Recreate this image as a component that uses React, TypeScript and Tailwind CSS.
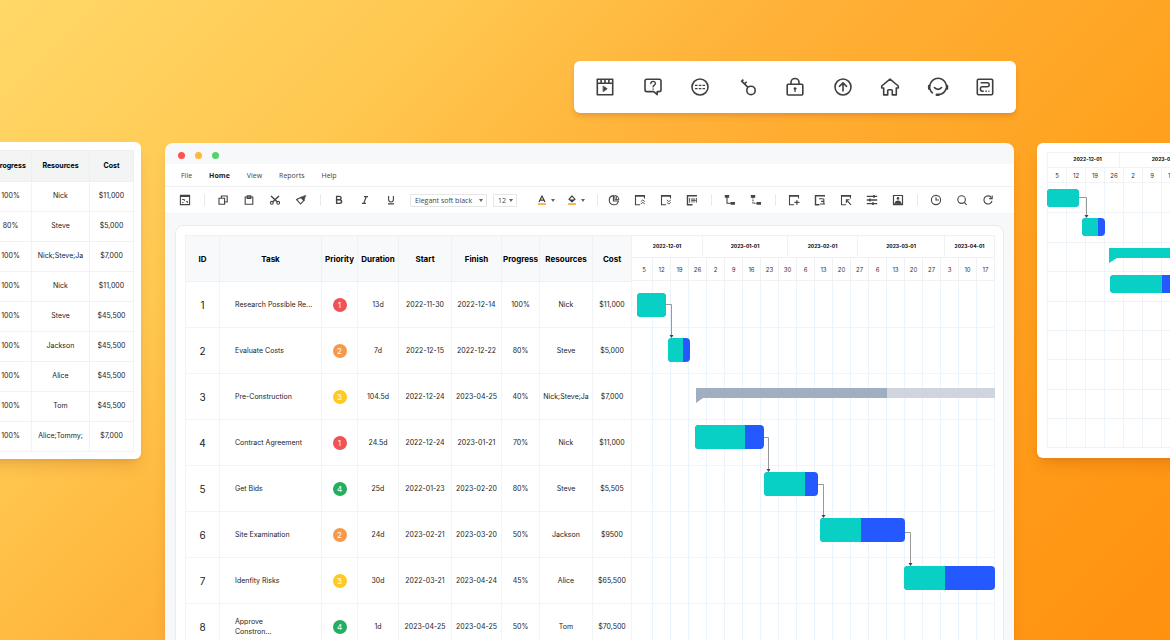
import type { ReactNode } from "react";
import clsx from "clsx";

type Task = {
  id: number;
  name: string;
  priority: 1 | 2 | 3 | 4;
  duration: string;
  start: string;
  finish: string;
  progress: string;
  resources: string;
  cost: string;
};

const TASKS: Task[] = [
  { id: 1, name: "Research Possible Re...", priority: 1, duration: "13d", start: "2022-11-30", finish: "2022-12-14", progress: "100%", resources: "Nick", cost: "$11,000" },
  { id: 2, name: "Evaluate Costs", priority: 2, duration: "7d", start: "2022-12-15", finish: "2022-12-22", progress: "80%", resources: "Steve", cost: "$5,000" },
  { id: 3, name: "Pre-Construction", priority: 3, duration: "104.5d", start: "2022-12-24", finish: "2023-04-25", progress: "40%", resources: "Nick;Steve;Ja", cost: "$7,000" },
  { id: 4, name: "Contract Agreement", priority: 1, duration: "24.5d", start: "2022-12-24", finish: "2023-01-21", progress: "70%", resources: "Nick", cost: "$11,000" },
  { id: 5, name: "Get Bids", priority: 4, duration: "25d", start: "2022-01-23", finish: "2023-02-20", progress: "80%", resources: "Steve", cost: "$5,505" },
  { id: 6, name: "Site Examination", priority: 2, duration: "24d", start: "2023-02-21", finish: "2023-03-20", progress: "50%", resources: "Jackson", cost: "$9500" },
  { id: 7, name: "Idenfity Risks", priority: 3, duration: "30d", start: "2022-03-21", finish: "2023-04-24", progress: "45%", resources: "Alice", cost: "$65,500" },
  { id: 8, name: "Approve Constron...", priority: 4, duration: "1d", start: "2023-04-25", finish: "2023-04-25", progress: "50%", resources: "Tom", cost: "$70,500" },
];

const PRIORITY_COLORS = {
  1: "bg-[#ee5456]",
  2: "bg-[#f6994a]",
  3: "bg-[#ffc91f]",
  4: "bg-[#26ae60]",
};

const COLUMNS = [
  { label: "ID", width: "w-[34px]" },
  { label: "Task", width: "" },
  { label: "Priority", width: "w-9" },
  { label: "Duration", width: "w-[41px]" },
  { label: "Start", width: "w-[53px]" },
  { label: "Finish", width: "w-[50px]" },
  { label: "Progress", width: "w-[38px]" },
  { label: "Resources", width: "w-[53px]" },
  { label: "Cost", width: "w-[39px]" },
];

const COSTS = [
  ["100%", "Nick", "$11,000"],
  ["80%", "Steve", "$5,000"],
  ["100%", "Nick;Steve;Ja", "$7,000"],
  ["100%", "Nick", "$11,000"],
  ["100%", "Steve", "$45,500"],
  ["100%", "Jackson", "$45,500"],
  ["100%", "Alice", "$45,500"],
  ["100%", "Tom", "$45,500"],
  ["100%", "Alice;Tommy;", "$7,000"],
];

const MONTHS = [
  { label: "2022-12-01", width: "w-[71px]" },
  { label: "2023-01-01", width: "w-[85px]" },
  { label: "2023-02-01", width: "w-[70px]" },
  { label: "2023-03-01", width: "w-[87px]" },
  { label: "2023-04-01", width: "w-[50px]" },
];

const WEEKS = [5, 12, 19, 26, 2, 9, 16, 23, 30, 6, 13, 20, 27, 6, 13, 20, 27, 3, 10, 17];

/* ---------- Icons ---------- */

function BigIcon({ label, children }: { label: string; children: ReactNode }) {
  return (
    <button type="button" aria-label={label} className="text-[#3f3f3f]">
      <svg viewBox="0 0 18 18" className="block h-[18px] w-[18px] overflow-visible" fill="none" stroke="currentColor" strokeWidth="1.6" strokeLinejoin="round" strokeLinecap="round">
        {children}
      </svg>
    </button>
  );
}

function Tool({ label, children }: { label: string; children: ReactNode }) {
  return (
    <button type="button" aria-label={label} className="flex h-5 w-[26px] items-center justify-center text-[#444]">
      <svg viewBox="0 0 12 12" className="h-3 w-3 overflow-visible" fill="none" stroke="currentColor" strokeWidth="1.1">
        {children}
      </svg>
    </button>
  );
}

function Divider() {
  return (
    <span className="flex w-3 justify-center">
      <span className="h-3 w-px bg-[#e9e9e9]" />
    </span>
  );
}

// Window outline shared by the insert / layout tools
function Frame() {
  return (
    <>
      <path d="M1.5 1v9.8h4.6M10.5 1v3.5" />
      <path d="M1 1.8h10" strokeWidth="1.8" />
    </>
  );
}

function Caret() {
  return (
    <svg viewBox="0 0 4 3" className="h-[3px] w-1" fill="#666">
      <path d="M0 0h4L2 3z" />
    </svg>
  );
}

/* ---------- Floating icon bar ---------- */

function IconBar() {
  return (
    <div className="flex h-[52px] w-[442px] items-center justify-between rounded-md bg-white px-[22px] shadow-md shadow-orange-900/15">
      <BigIcon label="Video">
        <path d="M1.3 1.3h15.4v15.4H1.3zM1.3 5.2h15.4M5.1 1.5v3.5M9 1.5v3.5M12.9 1.5v3.5" strokeLinecap="butt" />
        <path d="M7.4 8.2l3.8 2.6-3.8 2.6z" fill="currentColor" strokeWidth=".8" />
      </BigIcon>
      <BigIcon label="Help">
        <path d="M2.8 1.2h12.4q1.8 0 1.8 1.8v8.8q0 1.8-1.8 1.8h-2v3l-3.4-3h-7Q1 13.6 1 11.8V3q0-1.8 1.8-1.8z" />
        <path d="M6.8 5.7c0-3 4.7-3 4.7-.2 0 1.6-2.4 1.7-2.4 3.4M9.1 10.9v.3" strokeWidth="1.3" />
      </BigIcon>
      <BigIcon label="More">
        <circle cx="9" cy="9" r="8" />
        <path d="M4 7.4h2.6M7.8 7.4h2.6M11.6 7.4h2.4M4 10.6h2.6M7.8 10.6h2.6M11.6 10.6h2.4" strokeWidth="1.3" strokeLinecap="butt" />
      </BigIcon>
      <BigIcon label="Key">
        <circle cx="12" cy="12.4" r="4.2" />
        <path d="M9 9.4L2.2 2.6M5.4 6l2.2-2.2M2.2 3.6l2.2-2" strokeLinecap="butt" />
      </BigIcon>
      <BigIcon label="Lock">
        <rect x="1.2" y="6.2" width="15.6" height="10.8" rx="1" />
        <path d="M5 6V4.5a4 4 0 0 1 8 0V6" />
        <circle cx="9" cy="10.6" r="1.1" fill="currentColor" strokeWidth=".6" />
        <path d="M9 11v2.4" strokeWidth="1.3" />
      </BigIcon>
      <BigIcon label="Upload">
        <circle cx="9" cy="9" r="8" />
        <path d="M9 13V5.2M5.4 8.3L9 4.9l3.6 3.4" />
      </BigIcon>
      <BigIcon label="Home">
        <path d="M9 1.1L.7 8v2h2v6.9h4v-4.2q0-1 1-1h2.6q1 0 1 1v4.2h4V10h2V8z" />
      </BigIcon>
      <BigIcon label="Support">
        <path d="M.8 7.4a8.4 8.4 0 0 1 16.6 0M17.2 10.6a8.4 8.4 0 0 1-7.4 6M1 11.2c.5 1.6 1.3 2.6 2.4 3.6M5.4 9.6c1.8 2.4 5.4 2.4 7.2 0" />
        <path d="M.2 8v2.6M18 8v2.6M7.8 16.8h1.6" strokeWidth="2.6" />
      </BigIcon>
      <BigIcon label="Route">
        <rect x="1.3" y="1.3" width="15.4" height="15.4" rx="1.2" />
        <path d="M4.6 4.8h6.6q2 0 2 2t-2 2H6.4q-2 0-2 2.2t2 2.2h1.4M9.4 13.2h1.4M12.4 13.2h1" strokeWidth="1.5" strokeLinecap="butt" />
      </BigIcon>
    </div>
  );
}

/* ---------- Side cards ---------- */

function CostCard() {
  return (
    <div className="shrink-0 rounded-md bg-white px-[7px] pb-[7px] pt-2 shadow-lg shadow-orange-900/15">
      <table className="table-fixed border-collapse text-center text-[7px] text-[#222]">
        <thead>
          <tr className="h-[31px] bg-[#f3f4f4] font-bold text-black">
            <th className="w-[42px] border border-[#efefef] p-0">Progress</th>
            <th className="w-[58px] border border-[#efefef] p-0">Resources</th>
            <th className="w-11 border border-[#efefef] p-0">Cost</th>
          </tr>
        </thead>
        <tbody>
          {COSTS.map((row, i) => (
            <tr key={i} className="h-[30px]">
              {row.map((cell, j) => (
                <td key={j} className="whitespace-nowrap border border-[#f2f2f2] p-0">
                  {cell}
                </td>
              ))}
            </tr>
          ))}
        </tbody>
      </table>
    </div>
  );
}

type BarProps = { x: number; y: number; w: number; h: number; done: number };

function Bar({ x, y, w, h, done }: BarProps) {
  const id = `bar-${x}-${y}-${h}`;
  return (
    <g>
      <clipPath id={id}>
        <rect x={x} y={y} width={w} height={h} rx="4" />
      </clipPath>
      <g clipPath={`url(#${id})`}>
        <rect x={x} y={y} width={w} height={h} fill="#2459ff" />
        <rect x={x} y={y} width={done} height={h} fill="#08d0c5" />
      </g>
    </g>
  );
}

function Arrow({ x, y, toX, toY }: { x: number; y: number; toX: number; toY: number }) {
  return (
    <g>
      <path d={`M${x} ${y}H${toX}V${toY - 2}`} fill="none" stroke="#999" strokeWidth="1" />
      <path d={`M${toX - 2} ${toY - 3}h4l-2 3z`} fill="#444" />
    </g>
  );
}

function TimelineCard() {
  return (
    <div className="w-[400px] rounded-md bg-white px-[10px] pb-[10px] pt-[9px] shadow-lg shadow-orange-900/15">
      <div className="border-l border-t border-[#f0f2f4]">
        <div className="flex h-[15px] items-center border-b border-[#f0f2f4] text-center text-[5px] font-bold text-black">
          <span className="flex h-full w-[72px] items-center justify-center border-r border-[#f0f2f4] pl-2">2022-12-01</span>
          <span className="w-[92px]">2023-01-01</span>
        </div>
        <div className="flex h-[15px] border-b border-[#f0f2f4] text-[6px] text-[#333]">
          {WEEKS.slice(0, 18).map((w, i) => (
            <span key={i} className="flex w-[19px] shrink-0 items-center justify-center border-r border-[#f0f2f4]">
              {w}
            </span>
          ))}
        </div>
      </div>
      <svg className="block h-[265px] w-[380px]">
        {WEEKS.map((_, i) => (
          <path key={i} d={`M${i * 19 + 0.5} 0V265`} stroke="#edf5fb" />
        ))}
        {[29, 59, 88, 118, 147, 176, 206, 235, 264].map((y) => (
          <path key={y} d={`M0 ${y + 0.5}H380`} stroke="#f0f3f5" />
        ))}
        <Arrow x={32} y={14.5} toX={39.5} toY={35} />
        <Bar x={0} y={6} w={32} h={18} done={32} />
        <Bar x={35} y={35} w={23} h={18} done={16} />
        <path d="M62 65h318v10H70l-8 5z" fill="#08d0c5" />
        <Bar x={63} y={92} w={90} h={18} done={52} />
      </svg>
    </div>
  );
}

/* ---------- Editor window ---------- */

function MenuBar() {
  return (
    <nav className="flex h-[23px] shrink-0 items-center gap-[17px] border-b border-[#f0f1f2] bg-white px-4 pt-[3px] font-['Open_Sans',sans-serif] text-[7px] text-[#444]">
      <a href="#file">File</a>
      <a href="#home" className="font-bold text-[#222]">Home</a>
      <a href="#view">View</a>
      <a href="#reports">Reports</a>
      <a href="#help">Help</a>
    </nav>
  );
}

function ToolBar() {
  return (
    <div className="flex h-[27px] shrink-0 items-center overflow-hidden border-b border-[#f3f4f5] bg-white pl-[7px] font-['Open_Sans',sans-serif]">
      <Tool label="Save">
        <path d="M1.4 1.4h9.2v9.2H1.4z" />
        <path d="M1 2h10" strokeWidth="2" />
        <path d="M3 5.5h2.4M5.4 5.5v1.6M7 7.4h1.6v1.8M3 8.6h1.4" strokeWidth=".9" />
      </Tool>
      <Divider />
      <Tool label="Copy">
        <path d="M2 4.2h5.6v6H2zM4.4 4V2h5.8v6H7.8" />
      </Tool>
      <Tool label="Paste">
        <path d="M2.2 3h7.6v7.2H2.2zM4.2 1.8h3.6v2.6H4.2z" />
      </Tool>
      <Tool label="Cut">
        <path d="M2 2l6.4 6M10 2L3.6 8" strokeWidth="1.4" />
        <circle cx="2.8" cy="8.8" r="1.4" />
        <circle cx="9.2" cy="8.8" r="1.4" />
      </Tool>
      <Tool label="Format painter">
        <path d="M1.6 5.6L6 3.4l2.8 3L5.6 10z" />
        <path d="M5.6 3.2l3.6 3.6L9.8 4l1-2.8L8 2.4z" fill="currentColor" strokeWidth=".6" />
      </Tool>
      <Divider />
      <Tool label="Bold">
        <path d="M3.6 2.4h2.8a1.7 1.7 0 0 1 0 3.4H3.6zM3.6 5.8h3.2a1.8 1.8 0 0 1 0 3.6H3.6z" strokeWidth="1.4" />
      </Tool>
      <Tool label="Italic">
        <path d="M5 2.6h4M3 9.4h4M7.2 2.6L4.8 9.4" strokeWidth="1.2" />
      </Tool>
      <Tool label="Underline">
        <path d="M3.6 2v3.6a2.4 2.4 0 0 0 4.8 0V2M3 9.9h6" />
      </Tool>

      <div className="relative ml-1.5 flex items-center">
        <select aria-label="Font" className="h-[13px] w-[77px] appearance-none rounded-[1px] border border-[#e6e6e6] bg-white px-1 text-[7px] leading-[11px] text-[#444]">
          <option>Elegant soft black</option>
        </select>
        <span className="pointer-events-none absolute right-1">
          <Caret />
        </span>
      </div>
      <div className="relative ml-1.5 flex items-center">
        <select aria-label="Font size" className="h-[13px] w-6 appearance-none rounded-[1px] border border-[#e6e6e6] bg-white px-1 text-[7px] leading-[11px] text-[#444]">
          <option>12</option>
        </select>
        <span className="pointer-events-none absolute right-1">
          <Caret />
        </span>
      </div>

      <button type="button" aria-label="Text color" className="ml-3.5 flex w-[30px] items-center justify-center gap-1">
        <svg viewBox="0 0 10 12" className="h-3 w-[10px]" fill="none">
          <path d="M2 8l3-6 3 6M3 6.2h4" stroke="#3b3b3b" strokeWidth="1.2" />
          <path d="M1 10h8" stroke="#f6a21c" strokeWidth="1.6" />
        </svg>
        <Caret />
      </button>
      <button type="button" aria-label="Fill color" className="flex w-[30px] items-center justify-center gap-1">
        <svg viewBox="0 0 10 12" className="h-3 w-[10px]" fill="none">
          <path d="M5 2L2 5.2l3 2.6 3-2.6zM5 3V1.4" stroke="#3b3b3b" strokeWidth="1.1" />
          <path d="M2 5.4h6L5 8z" fill="#3b3b3b" />
          <path d="M1 10h8" stroke="#f6a21c" strokeWidth="1.6" />
        </svg>
        <Caret />
      </button>

      <Divider />
      <div className="-ml-0.5 flex items-center">
        <Tool label="Pie chart">
          <path d="M5.4 1.6A4.6 4.6 0 1 0 10.4 7H5.4z" />
          <path d="M6.8 1.4v4.2H11A4.4 4.4 0 0 0 6.8 1.4zM8.4 2v3.4" strokeWidth=".9" />
        </Tool>
        <Tool label="Collapse">
          <Frame />
          <path d="M6.8 7.6l2-1.6 2 1.6M6.8 10l2-1.6 2 1.6" strokeWidth=".9" />
        </Tool>
        <Tool label="Expand">
          <Frame />
          <path d="M6.8 6l2 1.6 2-1.6M6.8 8.4l2 1.6 2-1.6" strokeWidth=".9" />
        </Tool>
        <Tool label="Fit columns">
          <path d="M1.5 1v9.8h5M1 1.8h10" strokeWidth="1.4" />
          <path d="M3.6 4v4.6M6 4v4.6M8 4v4.6M10.4 4v4.6M5.4 6.3h5" strokeWidth=".9" />
        </Tool>
        <Divider />
        <Tool label="Link tasks">
          <path d="M3 3v6.2h4" />
          <path d="M.8 2.4h4.4M6.6 9.4H11" strokeWidth="2.6" />
        </Tool>
        <Tool label="Unlink tasks">
          <path d="M3 3v6.2h4" strokeDasharray="1.6 .8" />
          <path d="M.8 2.4h4.4M6.6 9.4H11" strokeWidth="2.6" />
        </Tool>
        <Divider />
        <Tool label="Insert">
          <Frame />
          <path d="M6.4 8.4h5M8.9 5.9v5" />
        </Tool>
        <Tool label="Indent">
          <path d="M1.5 1v9.8h4M1 1.8h10" strokeWidth="1.4" />
          <path d="M5 4.8h4.4M7 7.4h3.4M6 10h5M9.8 4.8V10" />
        </Tool>
        <Tool label="Select">
          <Frame />
          <path d="M6.4 9V5.8h3.2M6.4 5.8l4.6 5" />
        </Tool>
        <Tool label="Settings">
          <path d="M.8 2.4h10.4M.8 6h10.4M.8 9.6h10.4" strokeWidth="1.3" />
          <path d="M8 1v2.8M4 4.6v2.8M7 8.2V11" strokeWidth="1.6" />
        </Tool>
        <Tool label="Assign">
          <path d="M1.5 1.5h9v8.8h-9z" strokeWidth="1.2" />
          <circle cx="6" cy="4.4" r="1.3" fill="currentColor" stroke="none" />
          <path d="M2.6 9.8c.2-4.4 6.6-4.4 6.8 0z" fill="currentColor" stroke="none" />
          <path d="M1 10.4h10" strokeWidth="1.6" />
        </Tool>
        <Divider />
        <Tool label="History">
          <circle cx="6" cy="6" r="4.6" />
          <path d="M6 3.2V6h3" />
        </Tool>
        <Tool label="Search">
          <circle cx="5.6" cy="5.6" r="3.8" />
          <path d="M8.4 8.4l2.2 2.4" />
        </Tool>
        <Tool label="Refresh">
          <path d="M9.4 3.6A4.1 4.1 0 1 0 10 7" />
          <path d="M10.2 1.6v3H7.2" />
        </Tool>
      </div>
    </div>
  );
}

function TaskTable() {
  return (
    <table className="min-w-0 flex-1 table-fixed border-collapse text-center text-[7px] leading-[10px] text-[#222]">
      <thead>
        <tr className="h-[46px] bg-[#f7f9fb] text-[8px] text-black">
          {COLUMNS.map((c) => (
            <th key={c.label} className={clsx("whitespace-nowrap border border-[#f0f1f3] p-0 font-bold", c.width)}>
              {c.label}
            </th>
          ))}
        </tr>
      </thead>
      <tbody>
        {TASKS.map((t) => (
          <tr key={t.id} className="h-[46px] [&>td]:border [&>td]:border-[#f3f4f5] [&>td]:p-0">
            <td className="text-[10px]">{t.id}</td>
            <td className="text-left">
              <p className={clsx("pl-[15px]", t.id === 8 ? "w-16" : "truncate")}>{t.name}</p>
            </td>
            <td>
              <span className={clsx("mx-auto flex h-3.5 w-3.5 items-center justify-center rounded-full text-[8px] text-white", PRIORITY_COLORS[t.priority])}>
                {t.priority}
              </span>
            </td>
            <td>{t.duration}</td>
            <td className="whitespace-nowrap">{t.start}</td>
            <td className="whitespace-nowrap">{t.finish}</td>
            <td>{t.progress}</td>
            <td>{t.resources}</td>
            <td>{t.cost}</td>
          </tr>
        ))}
      </tbody>
    </table>
  );
}

function Gantt() {
  return (
    <div className="w-[363px] shrink-0 border-t border-[#f0f1f3]">
      <div className="flex h-[22px] border-b border-[#f0f1f3] text-[5px] font-bold text-black">
        {MONTHS.map((m) => (
          <span key={m.label} className={clsx("flex items-center justify-center border-r border-[#f0f1f3]", m.width)}>
            {m.label}
          </span>
        ))}
      </div>
      <div className="flex h-[23px] border-b border-[#f0f1f3] text-[6px] text-[#333]">
        {WEEKS.map((w, i) => (
          <span key={i} className="flex w-[18px] items-center justify-center border-r border-[#f0f1f3] first:w-[21px] first:pl-1">
            {w}
          </span>
        ))}
      </div>
      <svg className="block h-[368px] w-full">
        {WEEKS.map((_, i) => (
          <path key={i} d={`M${20.5 + i * 18} 0V368`} stroke="#ebf4fb" />
        ))}
        {TASKS.map((t, i) => (
          <path key={t.id} d={`M0 ${(i + 1) * 46 + 0.5}H363`} stroke="#f2f4f5" />
        ))}
        <Arrow x={34} y={23.5} toX={39.5} toY={57} />
        <Arrow x={131} y={156.5} toX={136.5} toY={191} />
        <Arrow x={185} y={203.5} toX={191.5} toY={237} />
        <Arrow x={273} y={251.5} toX={278.5} toY={285} />
        <Bar x={5} y={12} w={29} h={24} done={29} />
        <Bar x={36} y={57} w={22} h={24} done={15} />
        <path d="M64 107h191v10H71l-7 5z" fill="#a0aec1" />
        <path d="M255 107h108v10H255z" fill="#cfd4de" />
        <Bar x={63} y={144} w={69} h={24} done={50} />
        <Bar x={132} y={191} w={54} h={24} done={41} />
        <Bar x={188} y={237} w={85} h={24} done={41} />
        <Bar x={272} y={285} w={91} h={24} done={41} />
      </svg>
    </div>
  );
}

function EditorWindow() {
  return (
    <main className="mt-px flex min-w-0 flex-1 flex-col self-stretch overflow-hidden rounded-t-lg bg-[#f6f8fa] shadow-lg shadow-orange-900/15">
      <div className="flex h-[21px] shrink-0 items-center gap-2.5 px-[13px] pt-1">
        <span className="h-[7px] w-[7px] rounded-full bg-[#ff5052]" />
        <span className="h-[7px] w-[7px] rounded-full bg-[#ffb73c]" />
        <span className="h-[7px] w-[7px] rounded-full bg-[#55d26c]" />
      </div>
      <MenuBar />
      <ToolBar />
      <div className="min-h-0 flex-1 overflow-hidden px-[10px] pt-[11px]">
        <div className="flex items-start rounded-lg border border-[#e9ebed] bg-white pb-2 pl-[9px] pr-2 pt-[9px]">
          <TaskTable />
          <Gantt />
        </div>
      </div>
    </main>
  );
}

export default function App() {
  return (
    <div className="flex h-screen flex-col overflow-hidden bg-[linear-gradient(135deg,#ffd868_0%,#ffc850_25%,#ffb239_43%,#ffa220_69%,#ff910f_100%)] font-[Inter,sans-serif]">
      <header className="flex justify-end pb-[29px] pr-[154px] pt-[61px]">
        <IconBar />
      </header>
      <div className="flex min-h-0 flex-1 items-start">
        <aside className="mr-6 flex w-[141px] shrink-0 justify-end">
          <CostCard />
        </aside>
        <EditorWindow />
        <aside className="ml-[23px] mt-px w-[133px] shrink-0">
          <TimelineCard />
        </aside>
      </div>
    </div>
  );
}
